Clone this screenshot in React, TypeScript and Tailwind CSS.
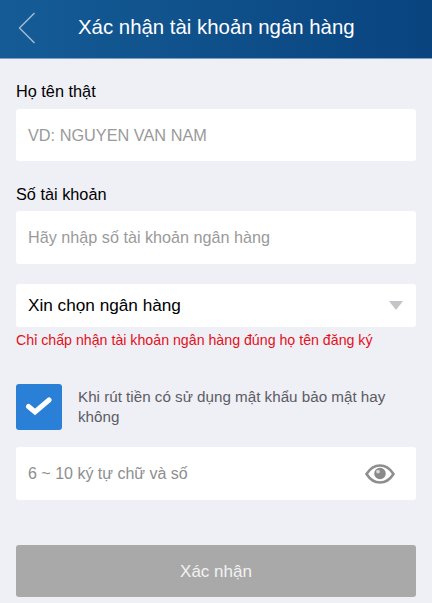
const font = { fontFamily: '"Liberation Sans", Arial, sans-serif' }

function EyeIcon() {
  return (
    <svg width="30" height="20" viewBox="0 0 30 20" fill="none">
      <path
        d="M1.5 10C5 4.5 9.5 1.5 15 1.5S25 4.5 28.5 10C25 15.5 20.5 18.5 15 18.5S5 15.5 1.5 10Z"
        stroke="#8e8e8e"
        strokeWidth="2.6"
      />
      <circle cx="15" cy="9.5" r="5.8" fill="#8a8a8a" />
      <circle cx="13" cy="7.6" r="1.9" fill="#d8d8d8" />
    </svg>
  )
}

export default function App() {
  return (
    <div className="w-[432px] h-[603px] overflow-hidden bg-[#efeff6]" style={font}>
      {/* Header */}
      <div className="h-[59px] flex items-center bg-gradient-to-r from-[#155c96] to-[#09447f] border-b border-[#7f9fbd]">
        <svg width="20" height="34" viewBox="0 0 20 34" fill="none" className="ml-[17px] mb-[2px]">
          <path d="M17.5 2 L2.5 17 L17.5 32" stroke="#a3bdd4" strokeWidth="1.4" />
        </svg>
        <span className="ml-[41px] mb-[3px] text-[20.4px] text-white">Xác nhận tài khoản ngân hàng</span>
      </div>

      <div className="px-4">
        <p className="mt-[23px] text-[16.3px] leading-[18px] text-black">Họ tên thật</p>
        <div className="mt-[9px] h-[52px] flex items-center px-3 rounded-[3px] bg-white text-[16.3px] text-[#9a9a9a]">
          VD: NGUYEN VAN NAM
        </div>

        <p className="mt-[24px] text-[16.3px] leading-[18px] text-black">Số tài khoản</p>
        <div className="mt-[8px] h-[53px] flex items-center px-3 rounded-[3px] bg-white text-[16.2px] text-[#9a9a9a]">
          Hãy nhập số tài khoản ngân hàng
        </div>

        {/* Select */}
        <div className="mt-[20px] h-[43px] flex items-center justify-between pl-3 pr-[13px] rounded-[3px] bg-white">
          <span className="text-[17.2px] text-black">Xin chọn ngân hàng</span>
          <svg width="14" height="9" viewBox="0 0 14 9">
            <path d="M0 0H14L7 9Z" fill="#c4c4c8" />
          </svg>
        </div>
        <p className="mt-[5px] text-[14.2px] leading-[17px] text-[#e3111b]">
          Chỉ chấp nhận tài khoản ngân hàng đúng họ tên đăng ký
        </p>

        {/* Checkbox */}
        <div className="mt-[35px] flex items-center">
          <div className="w-[46px] h-[46px] shrink-0 flex items-center justify-center rounded-[3px] bg-[#2a7fd6]">
            <svg width="28" height="22" viewBox="0 0 28 22" fill="none">
              <path d="M3.5 10.5 L10 16 L24 4" stroke="#fff" strokeWidth="5" strokeLinecap="round" />
            </svg>
          </div>
          <p className="ml-[16px] text-[15.2px] leading-[20px] text-[#5c5c62]">
            Khi rút tiền có sử dụng mật khẩu bảo mật hay không
          </p>
        </div>

        <div className="mt-[17px] h-[53px] flex items-center justify-between pl-3 pr-[21px] rounded-[3px] bg-white">
          <span className="text-[16px] text-[#8e8e8e]">6 ~ 10 ký tự chữ và số</span>
          <EyeIcon />
        </div>

        <button className="mt-[45px] w-full h-[52px] flex items-center justify-center pt-[2px] rounded-[3px] bg-[#a9a9a9] text-[17px] text-[#f2f2f2]">
          Xác nhận
        </button>
      </div>
    </div>
  )
}
